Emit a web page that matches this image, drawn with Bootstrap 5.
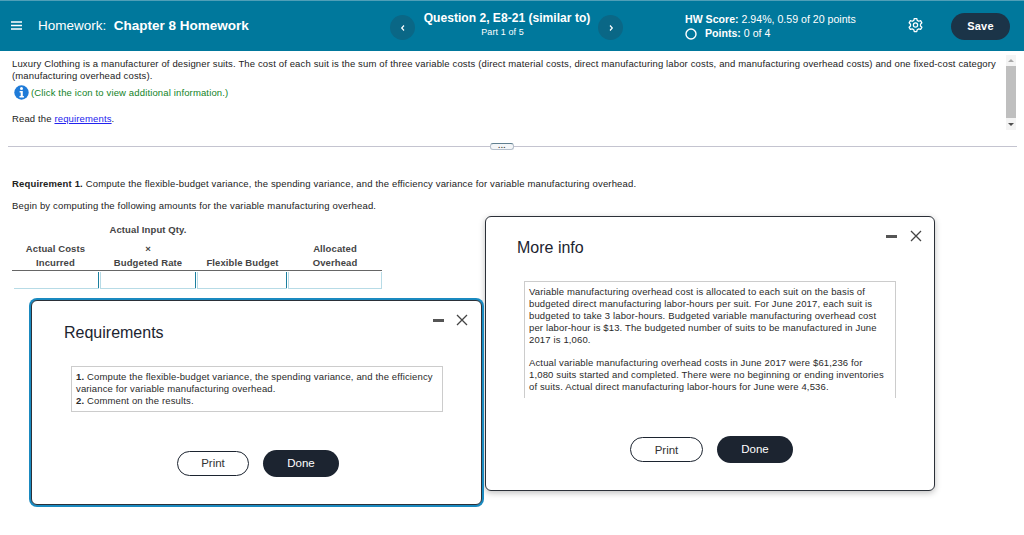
<!DOCTYPE html>
<html lang="en">
<head>
<meta charset="utf-8">
<title>Homework</title>
<link rel="stylesheet" href="https://cdn.jsdelivr.net/npm/bootstrap@5.3.0/dist/css/bootstrap.min.css">
<style>
html,body{height:100%;overflow:hidden}
body{font-family:"Liberation Sans",Arial,sans-serif;font-size:9.5px;line-height:12px;color:#222;background:#fff;position:relative;letter-spacing:.14px}
.topbar{height:51px;background:#00789c;border-top:1px solid #4f9fb8;color:#fff;position:relative}
.topbar .cell{position:absolute}
.ham{left:11px;top:20px;width:11px;height:9px}
.hw-title{left:38px;top:17px;font-size:13.5px;line-height:16px;letter-spacing:0;white-space:nowrap}
.nav-round{width:25px;height:25px;border-radius:50%;background:#0a6786;top:14px;display:flex;align-items:center;justify-content:center}
.q-block{left:423px;top:10px;width:168px;text-align:center;letter-spacing:0}
.q-name{font-size:12.1px;line-height:15px;font-weight:700}
.q-part{font-size:9px;line-height:13px;letter-spacing:.1px;padding-right:9px}
.score{left:685px;top:11px;font-size:10.6px;line-height:14px;letter-spacing:0;white-space:nowrap}
.score svg{vertical-align:-3px;margin-right:8px}
.gear{left:908px;top:16px}
.save-pill{left:951px;top:12px;width:59px;height:27px;border-radius:14px;background:#1b3448;color:#fff;font-weight:700;font-size:11px;line-height:27px;padding:0;border:0;letter-spacing:.2px}
.pane{position:relative;height:81px;padding:7px 12px 0;margin:0}
.pane p{margin:0;width:994px}
.info-row{color:#12831f;display:flex;align-items:center;margin-top:3px;height:15px;margin-left:2px}
.info-row svg{margin-right:2px;flex:none}
.read{margin-top:13px!important}
.read a{color:#2222ee}
.sbar{position:absolute;left:1006px;top:4px;width:10px;height:75px;background:#f4f4f4}
.sbar i{position:absolute;left:0;right:0;top:11px;height:52px;background:#bfbfbf}
.sbar b{position:absolute;left:2px;width:0;height:0;border-left:3px solid transparent;border-right:3px solid transparent}
.sbar .up{top:4px;border-bottom:3px solid #a9a9a9}
.sbar .dn{bottom:4px;border-top:3px solid #505050}
.rule{position:relative;height:1px;background:#c4c4d0;margin:14px 7px 0 8px}
.dots{position:absolute;left:482px;top:-3px;width:24px;height:7px;border:1px solid #b5bfca;border-top-color:#5f7f8f;border-radius:3px;background:#f4f6f8;font-size:8px;line-height:3px;text-align:center;color:#444;letter-spacing:.5px;font-weight:700}
.req-line{margin:31px 0 0 12px;letter-spacing:.16px}
.begin{margin:10px 0 0 12px;letter-spacing:.16px}
.calc{margin:13px 0 0 12px;width:370px;font-weight:700;color:#444;letter-spacing:.1px;text-align:center}
.calc-top{height:10px;line-height:10px}
.calc-heads{display:grid;grid-template-columns:87px 98px 91px 94px;margin-top:7px;border-bottom:1px solid #666}
.calc-heads div{line-height:14px}
.calc-inputs{display:grid;grid-template-columns:87px 97px 91px 95px;padding-top:1px}
.calc-inputs div{border:1px solid #b7dbe6;border-top:0;border-left:0;margin-left:1px;position:relative;height:17px}
.calc-inputs div:first-child{margin-left:2px}
.calc-inputs div:not(:first-child){border-left:1px solid #b7dbe6}
.calc-inputs div:not(:last-child)::after{content:"";position:absolute;right:-1px;top:0;bottom:0;width:1px;background:#1b7f9f}
.dlg{position:absolute;background:#fff;border:1px solid #2b3038;border-radius:6px;box-shadow:0 2px 6px rgba(0,0,0,.25)}
.dlg-more{left:485px;top:216px;width:450px;height:275px}
.dlg-req{left:31px;top:300px;width:451px;height:205px;box-shadow:0 0 0 2px #1a8ac0}
.dlg-title{position:absolute;left:31px;top:21px;font-size:16px;line-height:20px;color:#1c2430;letter-spacing:0}
.dlg-req .dlg-title{left:32px;top:22px}
.ctrl{position:absolute;right:12px;top:13px;display:flex;align-items:center;gap:13px}
.dlg-req .ctrl{right:13px;gap:12px}
.box{position:absolute;left:38px;width:372px;border:1px solid #ccc;padding:4px;color:#2a2a2a}
.dlg-more .box{top:64px;height:117px;border-bottom:0;padding-right:7px}
.dlg-more .box p{margin:0 0 11px}
.dlg-req .box{left:39px;top:65px;height:46px}
.acts{position:absolute;display:flex;gap:14px;align-items:center;left:144px}
.dlg-req .acts{left:145px;top:149px}
.dlg-more .acts{top:219px}
.btn-print{width:73px;height:25px;border:1.5px solid #1c2430;border-radius:13px;background:#fff;font-size:11.5px;line-height:18px;padding:0;color:#333;letter-spacing:0}
.dlg-req .btn-print{width:72px;line-height:17px}
.btn-done{width:76px;height:27px;border:0;border-radius:14px;background:#1c2430;color:#fff;font-size:11.5px;line-height:25px;padding:0;letter-spacing:0}
</style>
</head>
<body>
<header class="topbar">
  <svg class="cell ham" viewBox="0 0 11 9"><path d="M0 1h11M0 4.5h11M0 8h11" stroke="#fff" stroke-width="1.3"/></svg>
  <div class="cell hw-title">Homework:&nbsp; <b>Chapter 8 Homework</b></div>
  <div class="cell nav-round" style="left:390px"><svg width="6" height="8" viewBox="0 0 6 8"><path d="M4 1.5 1.7 4 4 6.5" fill="none" stroke="#fff" stroke-width="1.2"/></svg></div>
  <div class="cell q-block"><div class="q-name">Question 2, E8-21 (similar to)</div><div class="q-part">Part 1 of 5</div></div>
  <div class="cell nav-round" style="left:598px"><svg width="6" height="8" viewBox="0 0 6 8"><path d="M2 1.5 4.3 4 2 6.5" fill="none" stroke="#fff" stroke-width="1.2"/></svg></div>
  <div class="cell score"><div><b>HW Score:</b> 2.94%, 0.59 of 20 points</div><div><svg width="12" height="12" viewBox="0 0 12 12"><circle cx="6" cy="6" r="5" fill="none" stroke="#fff" stroke-width="1.4"/></svg><b>Points:</b> 0 of 4</div></div>
  <svg class="cell gear" width="15" height="16" viewBox="0 0 24 24" fill="none" stroke="#fff" stroke-width="2"><circle cx="12" cy="12" r="3.4"/><path d="M10 1.6h4l.7 3 2.5 1.4 3-.9 2 3.4-2.2 2.2v2.8l2.2 2.2-2 3.4-3-.9-2.5 1.4-.7 3h-4l-.7-3-2.5-1.4-3 .9-2-3.4 2.2-2.2v-2.8L1.8 8.5l2-3.4 3 .9 2.5-1.4z" stroke-linejoin="round"/></svg>
  <button class="cell save-pill btn" type="button">Save</button>
</header>
<main>
  <section class="pane">
    <p>Luxury Clothing is a manufacturer of designer suits. The cost of each suit is the sum of three variable costs (direct material costs, direct manufacturing labor costs, and manufacturing overhead costs) and one fixed-cost category (manufacturing overhead costs).</p>
    <div class="info-row"><svg width="15" height="15" viewBox="0 0 15 15"><circle cx="7.5" cy="7.5" r="7.2" fill="#1f7bd8"/><circle cx="7.5" cy="3.6" r="1.5" fill="#fff"/><path d="M5.6 6h3.2v5h1.1v1.4H5.5V11h1.2V7.4H5.6z" fill="#fff"/></svg>(Click the icon to view additional information.)</div>
    <p class="read">Read the <a href="#">requirements</a>.</p>
    <div class="sbar"><b class="up"></b><i></i><b class="dn"></b></div>
  </section>
  <div class="rule"><div class="dots">...</div></div>
  <p class="req-line"><b>Requirement 1.</b> Compute the flexible-budget variance, the spending variance, and the efficiency variance for variable manufacturing overhead.</p>
  <p class="begin">Begin by computing the following amounts for the variable manufacturing overhead.</p>
  <div class="calc">
    <div class="calc-top"><span style="margin-right:98px">Actual Input Qty.</span></div>
    <div class="calc-heads">
      <div>Actual Costs<br>Incurred</div>
      <div>×<br>Budgeted Rate</div>
      <div><br>Flexible Budget</div>
      <div>Allocated<br>Overhead</div>
    </div>
    <div class="calc-inputs"><div></div><div></div><div></div><div></div></div>
  </div>
</main>
<section class="dlg dlg-more">
  <div class="dlg-title">More info</div>
  <div class="ctrl"><svg width="11" height="3" viewBox="0 0 11 3"><rect width="11" height="3" fill="#555"/></svg><svg width="12" height="12" viewBox="0 0 12 12"><path d="M1 1l10 10M11 1 1 11" stroke="#444" stroke-width="1.3"/></svg></div>
  <div class="box"><p>Variable manufacturing overhead cost is allocated to each suit on the basis of budgeted direct manufacturing labor-hours per suit. For June 2017, each suit is budgeted to take 3 labor-hours. Budgeted variable manufacturing overhead cost per labor-hour is $13. The budgeted number of suits to be manufactured in June 2017 is 1,060.</p><p>Actual variable manufacturing overhead costs in June 2017 were $61,236 for 1,080 suits started and completed. There were no beginning or ending inventories of suits. Actual direct manufacturing labor-hours for June were 4,536.</p></div>
  <div class="acts"><button class="btn btn-print" type="button">Print</button><button class="btn btn-done" type="button">Done</button></div>
</section>
<section class="dlg dlg-req">
  <div class="dlg-title">Requirements</div>
  <div class="ctrl"><svg width="11" height="3" viewBox="0 0 11 3"><rect width="11" height="3" fill="#555"/></svg><svg width="12" height="12" viewBox="0 0 12 12"><path d="M1 1l10 10M11 1 1 11" stroke="#444" stroke-width="1.3"/></svg></div>
  <div class="box"><b>1.</b> Compute the flexible-budget variance, the spending variance, and the efficiency variance for variable manufacturing overhead.<br><b>2.</b> Comment on the results.</div>
  <div class="acts"><button class="btn btn-print" type="button">Print</button><button class="btn btn-done" type="button">Done</button></div>
</section>
<script src="https://cdn.jsdelivr.net/npm/bootstrap@5.3.0/dist/js/bootstrap.bundle.min.js"></script>
</body>
</html>
